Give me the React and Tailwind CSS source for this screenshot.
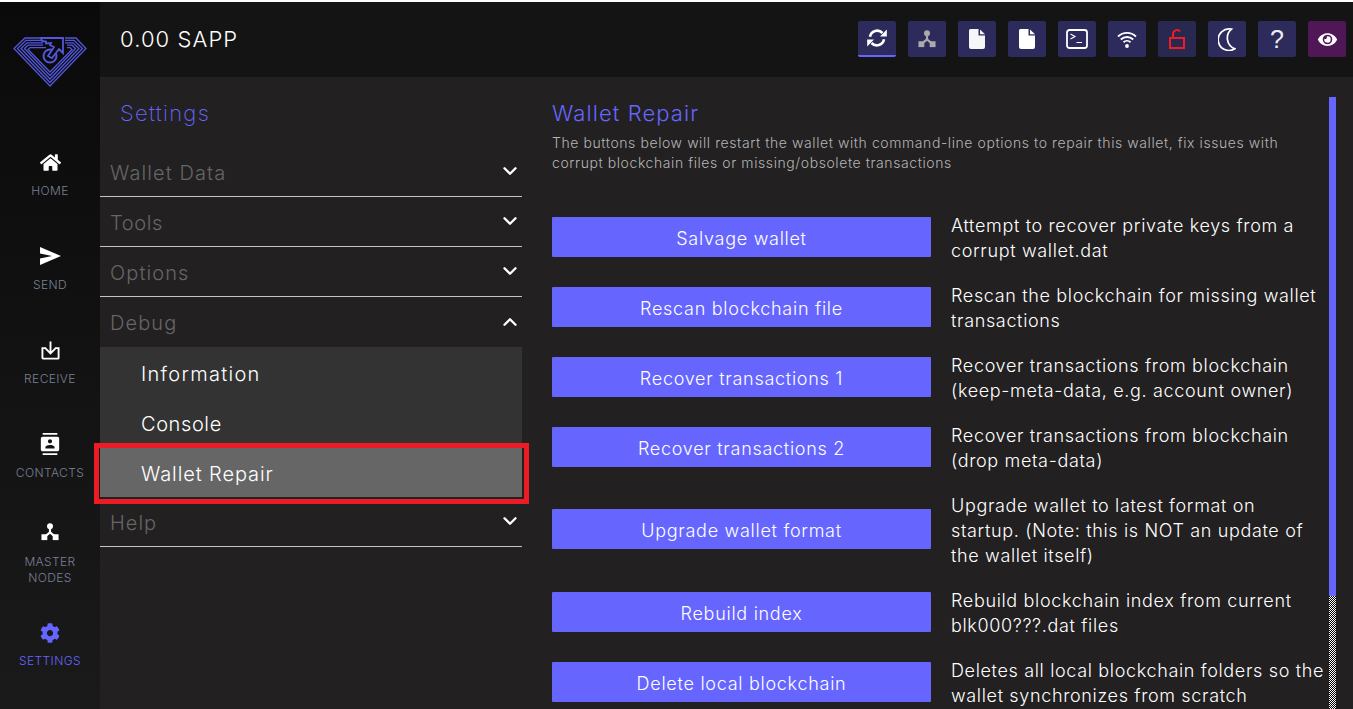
import React from "react";
import { FaHome, FaCog, FaEye } from "react-icons/fa";
import { MdContacts } from "react-icons/md";
import { FiChevronDown, FiChevronUp } from "react-icons/fi";

const Font = "font-['Inter','Liberation_Sans',sans-serif]";

function Nodes({ className }) {
  return (
    <svg viewBox="0 0 20 20" className={className} fill="currentColor">
      <circle cx="10" cy="3.500" r="3.300" />
      <rect x="0.500" y="12.500" width="6.500" height="6.500" />
      <rect x="13" y="12.500" width="6.500" height="6.500" />
      <path d="M10 4v7M10 10.500L4 15.500M10 10.500L16 15.500" stroke="currentColor" strokeWidth="2.400" fill="none" />
    </svg>
  );
}

function Receive({ className }) {
  return (
    <svg viewBox="0 0 20 20" className={className} fill="none" stroke="currentColor" strokeWidth="2">
      <path d="M10 0.500v12.500M5 8l5 5 5-5" />
      <path d="M5.500 7.500H1.500v10.300a0.700 0.700 0 0 0 0.700 0.700h15.600a0.700 0.700 0 0 0 0.700-0.700V7.500H14.500" />
    </svg>
  );
}

function Send({ className }) {
  return (
    <svg viewBox="0 0 21 18" className={className} fill="currentColor">
      <path d="M0 0L21 9L0 18V11.500L12 9L0 6.500z" />
    </svg>
  );
}

function Logo({ className }) {
  return (
    <svg viewBox="0 0 74 52" className={className} fill="none" stroke="#5257dc" strokeWidth="1.300">
      <path d="M30 2H12L1 12.500L37 50L73 12.500L63 2H52" />
      <path d="M30 4.400H13L4.500 12.500L37 46.500L69.500 12.500L61 4.400H52" />
      <path d="M30 6.800H14L8 12.500L37 43L66 12.500L60 6.800H52" />
      <path d="M30 9.200H15L11.500 12.500L37 39.500L62.500 12.500L59 9.200H54" />
      <path d="M33 11.600H17L15 13.500L37 36L59 13.500L57 11.600H54" />
      <circle cx="37" cy="20" r="6.500" strokeWidth="2" />
      <path d="M28 2H50V17L46 13L39 22L35 20L41 11L37 9L38 7L33 7.500V5.500L29 5z" fill="#0b0b0b" strokeWidth="1.800" />
    </svg>
  );
}

function Unlock({ className }) {
  return (
    <svg viewBox="0 0 16 20" className={className} fill="none" stroke="#f01c24" strokeWidth="2">
      <rect x="1" y="9" width="14" height="10" />
      <path d="M4 9V5a4 4 0 0 1 7-2.500" />
    </svg>
  );
}

function Crescent({ className }) {
  return (
    <svg viewBox="0 0 18 23" className={className} fill="none" stroke="currentColor" strokeWidth="1.700">
      <path d="M13.500 1.200A10.800 10.800 0 1 0 16.800 20.800A11.500 11.500 0 0 1 13.500 1.200z" />
    </svg>
  );
}

function Sync({ className }) {
  return (
    <svg viewBox="0 0 20 20" className={className}>
      <path d="M3 8.800A7.300 7.300 0 0 1 15.500 5" fill="none" stroke="currentColor" strokeWidth="2.600" />
      <path d="M17 11.200A7.300 7.300 0 0 1 4.500 15" fill="none" stroke="currentColor" strokeWidth="2.600" />
      <path d="M19.800 1.500V8.500H13z" fill="currentColor" />
      <path d="M0.200 18.500V11.500H7z" fill="currentColor" />
    </svg>
  );
}

function FileIcon({ className }) {
  return (
    <svg viewBox="0 0 16 20" className={className} fill="currentColor">
      <path d="M1.500 0H9.500V6.500H16V18a2 2 0 0 1-2 2H2a2 2 0 0 1-2-2V1.500A1.500 1.500 0 0 1 1.500 0z" />
      <path d="M11 0.500L16 5.200H11z" />
    </svg>
  );
}

function Terminal({ className }) {
  return (
    <svg viewBox="0 0 22 20" className={className} fill="none" stroke="currentColor" strokeWidth="1.500">
      <rect x="1" y="1" width="20" height="18" rx="2.500" strokeWidth="1.800" />
      <path d="M4.500 5L9 7.500L4.500 10M10.500 13.500H16" strokeWidth="1.100" />
    </svg>
  );
}

function Wifi({ className }) {
  return (
    <svg viewBox="0 0 20 17" className={className} fill="none" stroke="currentColor" strokeWidth="1.900">
      <path d="M1 5.500a13 13 0 0 1 18 0" />
      <path d="M3.800 8.500a9 9 0 0 1 12.400 0" />
      <path d="M6.500 11.300a5 5 0 0 1 7 0" />
      <circle cx="10" cy="15" r="1.900" fill="currentColor" stroke="none" />
    </svg>
  );
}

const nav = [
  { label: ["HOME"], icon: <FaHome className="w-[21px] h-[19px]" />, h: "h-[94px]", mt: "mt-[8px]" },
  { label: ["SEND"], icon: <Send className="w-[21px] h-[18px]" />, h: "h-[94px]", mt: "mt-[8px]" },
  { label: ["RECEIVE"], icon: <Receive className="w-[19px] h-[19px]" />, h: "h-[94px]", mt: "mt-[8px]" },
  { label: ["CONTACTS"], icon: <MdContacts className="w-[22px] h-[22px]" />, h: "h-[88px]", mt: "mt-[8px]" },
  { label: ["MASTER", "NODES"], icon: <Nodes className="w-[18px] h-[18px]" />, h: "h-[101px]", mt: "mt-[9px]" },
];

const topButtons = [
  { icon: <Sync className="w-[20px] h-[20px] text-white" />, bg: "bg-[#2d2b5c]", active: true },
  { icon: <Nodes className="w-[18px] h-[18px] text-[#aaaaaa]" />, bg: "bg-[#2d2b5c]" },
  { icon: <FileIcon className="w-[16px] h-[20px] text-[#f6f6f6]" />, bg: "bg-[#2d2b5c]" },
  { icon: <FileIcon className="w-[16px] h-[20px] text-white" />, bg: "bg-[#2d2b5c]" },
  { icon: <Terminal className="w-[22px] h-[20px] text-white" />, bg: "bg-[#2d2b5c]" },
  { icon: <Wifi className="w-[20px] h-[17px] text-white" />, bg: "bg-[#2d2b5c]" },
  { icon: <Unlock className="w-[16px] h-[20px]" />, bg: "bg-[#292850]" },
  { icon: <Crescent className="w-[18px] h-[23px] text-white" />, bg: "bg-[#2d2b5c]" },
  { icon: <span className="font-['Liberation_Sans',sans-serif] text-[25px] leading-[25px] text-[#eeeeee]">?</span>, bg: "bg-[#2d2b5c]" },
  { icon: <FaEye className="w-[21px] h-[17px] text-white" />, bg: "bg-[#4f1756]" },
];

const actions = [
  ["Salvage wallet", ["Attempt to recover private keys from a", "corrupt wallet.dat"]],
  ["Rescan blockchain file", ["Rescan the blockchain for missing wallet", "transactions"]],
  ["Recover transactions 1", ["Recover transactions from blockchain", "(keep-meta-data, e.g. account owner)"]],
  ["Recover transactions 2", ["Recover transactions from blockchain", "(drop meta-data)"]],
  ["Upgrade wallet format", ["Upgrade wallet to latest format on", "startup. (Note: this is NOT an update of", "the wallet itself)"]],
  ["Rebuild index", ["Rebuild blockchain index from current", "blk000???.dat files"]],
  ["Delete local blockchain", ["Deletes all local blockchain folders so the", "wallet synchronizes from scratch"]],
];

function Acc({ title, open, border = true, track = "tracking-[1.100px]" }) {
  return (
    <div className={`h-[50px] flex items-center justify-between pl-[10px] pr-[1px] ${border ? "border-b border-[#c4c4c4]" : ""}`}>
      <span className={`text-[20px] font-light text-[#666666] ${border ? "mt-[3px]" : "mt-[1px]"} ${track}`}>{title}</span>
      {open ? (
        <FiChevronUp className="w-[22px] h-[22px] text-white mb-[1px]" strokeWidth={2.600} />
      ) : (
        <FiChevronDown className="w-[22px] h-[22px] text-white mb-[1px]" strokeWidth={2.600} />
      )}
    </div>
  );
}

function Sub({ children, track, active }) {
  return (
    <div className={`h-[50px] flex items-center pl-[41px] pt-[3px] text-[20px] font-light text-white ${track} ${active ? "bg-[#666666]" : ""}`}>
      {children}
    </div>
  );
}

export default function App() {
  return (
    <div className={`${Font} relative w-[1353px] h-[709px] overflow-hidden bg-white pt-[2px] flex`}>
      <aside className="w-[100px] shrink-0 flex flex-col items-center bg-gradient-to-b from-[#0a0a0a] to-[#1a1a1a]">
        <Logo className="w-[74px] h-[52px] mt-[34px] mb-[61px]" />
        {nav.map((n) => (
          <div key={n.label[0]} className={`${n.h} w-full flex flex-col items-center text-white`}>
            <div className="h-[26px] flex items-center justify-center">{n.icon}</div>
            <div className={`${n.mt} text-[12px] leading-[16px] text-center text-[#7a8096] font-light tracking-[0.4px]`}>
              {n.label.map((l) => (
                <div key={l}>{l}</div>
              ))}
            </div>
          </div>
        ))}
        <div className="w-full flex flex-col items-center text-[#6666ff]">
          <div className="h-[26px] flex items-center justify-center">
            <FaCog className="w-[20px] h-[20px]" />
          </div>
          <div className="mt-[7px] text-[12px] leading-[16px] font-light tracking-[0.4px]">SETTINGS</div>
        </div>
      </aside>
      <div className="flex-1 min-w-0 flex flex-col">
        <header className="h-[75px] shrink-0 bg-[#141414] flex items-center justify-between pl-[20px] pr-[7px]">
          <span className="text-[22px] font-light text-white tracking-[1.100px] mb-[1px]">0.00 SAPP</span>
          <div className="flex items-center gap-[12px] mb-[1px]">
            {topButtons.map((b, i) => (
              <div
                key={i}
                className={`w-[38px] h-[36px] rounded-[2px] flex items-center justify-center ${b.bg} ${b.active ? "border-b-2 border-[#6666ff]" : ""}`}
              >
                {b.icon}
              </div>
            ))}
          </div>
        </header>
        <main className="flex-1 min-h-0 bg-[#222021] flex overflow-hidden">
          <section className="w-[422px] shrink-0">
            <h2 className="h-[70px] pl-[20px] pt-[20px] text-[22px] leading-[32px] font-extralight text-[#6666ff] tracking-[1.300px]">Settings</h2>
            <Acc title="Wallet Data" />
            <Acc title="Tools" track="tracking-[0.600px]" />
            <Acc title="Options" />
            <Acc title="Debug" open border={false} />
            <div className="bg-[#333333]">
              <Sub track="tracking-[1.300px]">Information</Sub>
              <Sub track="tracking-[0.600px]">Console</Sub>
              <Sub track="tracking-[0.900px]" active>Wallet Repair</Sub>
            </div>
            <Acc title="Help" track="tracking-[1px]" />
          </section>
          <section className="flex-1 min-w-0 pl-[30px] pt-[20px] relative">
            <h1 className="text-[22px] leading-[32px] font-light text-[#6666ff] tracking-[1.100px]">Wallet Repair</h1>
            <p className="mt-[4px] text-[14px] leading-[20px] font-light text-[#b5b5b5] tracking-[0.580px] whitespace-nowrap">
              The buttons below will restart the wallet with command-line options to repair this wallet, fix issues with
              <br />
              corrupt blockchain files or missing/obsolete transactions
            </p>
            <div className="mt-[39px] flex flex-col gap-[20px]">
              {actions.map(([btn, lines]) => (
                <div key={btn} className="flex items-center gap-[20px]">
                  <div className={`w-[379px] h-[40px] shrink-0 rounded-[1px] bg-[#6666ff] text-white text-[18px] font-light tracking-[0.720px] flex items-center justify-center ${lines.length === 3 ? "mb-[2px] pt-[4px]" : "pt-[2px]"}`}>
                    {btn}
                  </div>
                  <div className="text-[18px] leading-[25px] font-light text-white tracking-[0.650px] whitespace-nowrap relative top-[1px]">
                    {lines.map((l) => (
                      <div key={l}>{l}</div>
                    ))}
                  </div>
                </div>
              ))}
            </div>
            <div className="absolute left-[807px] top-[20px] w-[7px] h-[612px] flex flex-col">
              <div className="h-[499px] bg-[#6666ff]" />
              <div className="flex-1 bg-[repeating-conic-gradient(#ffffff_0_25%,#000000_0_50%)] bg-[length:2px_2px]" />
            </div>
          </section>
        </main>
      </div>
      <div className="absolute left-[94px] top-[443px] w-[435px] h-[61px] border-[5px] border-[#ed1c24]" />
    </div>
  );
}
